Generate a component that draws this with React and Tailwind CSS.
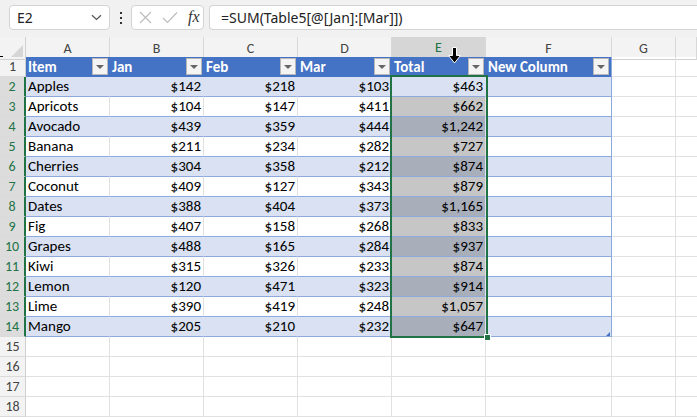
import React from 'react';

const ROWS = [
  ['Apples', '$142', '$218', '$103', '$463'],
  ['Apricots', '$104', '$147', '$411', '$662'],
  ['Avocado', '$439', '$359', '$444', '$1,242'],
  ['Banana', '$211', '$234', '$282', '$727'],
  ['Cherries', '$304', '$358', '$212', '$874'],
  ['Coconut', '$409', '$127', '$343', '$879'],
  ['Dates', '$388', '$404', '$373', '$1,165'],
  ['Fig', '$407', '$158', '$268', '$833'],
  ['Grapes', '$488', '$165', '$284', '$937'],
  ['Kiwi', '$315', '$326', '$233', '$874'],
  ['Lemon', '$120', '$471', '$323', '$914'],
  ['Lime', '$390', '$419', '$248', '$1,057'],
  ['Mango', '$205', '$210', '$232', '$647'],
];

const HEADERS = ['Item', 'Jan', 'Feb', 'Mar', 'Total', 'New Column'];
const COLS = ['A', 'B', 'C', 'D', 'E', 'F', 'G', ''];
const GRID = 'grid grid-cols-[26px_84px_94px_94px_94px_94px_126px_64px_1fr]';
const cellFont = { fontFamily: 'Carlito, Lato, "Liberation Sans", sans-serif' };

function FilterButton() {
  return (
    <div className="absolute right-[2px] top-[1px] w-[16px] h-[17px] bg-[#f4f4f4] border border-[#b8b8b8] flex items-center justify-center">
      <div className="w-0 h-0 border-l-[4px] border-r-[4px] border-t-[4px] border-l-transparent border-r-transparent border-t-[#666]" />
    </div>
  );
}

function RowHeader({ n, selected }) {
  return (
    <div
      className={`h-[20px] flex items-center justify-center text-[14px] border-b border-[#dadada] ${
        selected ? 'bg-[#dcdcdc] text-[#217346] border-r-2 border-r-[#217346]' : 'bg-[#f3f3f3] text-[#444] border-r border-r-[#d0d0d0]'
      }`}
      style={cellFont}
    >
      {n}
    </div>
  );
}

function TopBar() {
  return (
    <div className="h-[37px] bg-[#f1f1f1] flex items-start pt-[5px] pl-[9px] font-['Noto_Sans','Open_Sans',sans-serif]">
      <div className="w-[101px] h-[25px] bg-white border border-[#d4d4d4] rounded-[4px] flex items-center justify-between pl-[7px] pr-[7px] text-[14px] text-[#222]">
        <span>E2</span>
        <svg width="11" height="7" viewBox="0 0 11 7" fill="none" stroke="#555" strokeWidth="1.2">
          <path d="M1 1.2 L5.5 5.5 L10 1.2" />
        </svg>
      </div>
      <div className="w-[21px] h-[25px] flex flex-col items-center justify-center gap-[3px]">
        <div className="w-[2px] h-[2px] bg-[#333]" />
        <div className="w-[2px] h-[2px] bg-[#333]" />
        <div className="w-[2px] h-[2px] bg-[#333]" />
      </div>
      <div className="w-[73px] h-[25px] bg-white border border-[#d4d4d4] rounded-[4px] flex items-center pl-[7px] gap-[10px]">
        <svg width="13" height="13" viewBox="0 0 13 13" stroke="#bdbdbd" strokeWidth="1.2">
          <path d="M1 1 L12 12 M12 1 L1 12" />
        </svg>
        <svg width="16" height="13" viewBox="0 0 16 13" fill="none" stroke="#bdbdbd" strokeWidth="1.2">
          <path d="M1 7 L5.5 11.5 L15 1.5" />
        </svg>
        <span className="text-[16px] italic text-[#333] -mt-[2px]" style={{ fontFamily: '"Liberation Serif", serif' }}>fx</span>
      </div>
      <div className="ml-[5px] flex-1 h-[25px] bg-white border border-[#d4d4d4] rounded-l-[4px] border-r-0 flex items-center pl-[11px] text-[14px] text-[#222]">
        =SUM(Table5[@[Jan]:[Mar]])
      </div>
    </div>
  );
}

function ColumnHeader() {
  return (
    <div className={`${GRID} h-[20px] bg-[#f3f3f3]`}>
      <div className="relative border-r border-b border-[#d0d0d0]">
        <svg className="absolute right-[2px] bottom-[2px]" width="12" height="12" viewBox="0 0 12 12">
          <path d="M12 0 V12 H0 Z" fill="#d6d6d6" />
        </svg>
      </div>
      {COLS.map((c, i) => (
        <div
          key={i}
          className={`flex items-center justify-center text-[14px] border-r border-[#d8d8d8] ${
            c === 'E' ? 'bg-[#d6d6d6] text-[#217346] border-b-2 border-b-[#217346]' : 'text-[#444] border-b border-b-[#d0d0d0]'
          }`}
          style={cellFont}
        >
          {c}
        </div>
      ))}
    </div>
  );
}

function HeaderRow() {
  return (
    <div className={`${GRID} h-[20px]`}>
      <RowHeader n={1} />
      {HEADERS.map((h, i) => (
        <div
          key={h}
          className={`relative bg-[#4472c4] text-white font-bold text-[15px] pl-[2px] leading-[20px] ${i === 5 ? 'border-r border-r-[#8ea9db]' : ''}`}
          style={cellFont}
        >
          {h}
          <FilterButton />
        </div>
      ))}
      <div className="border-r border-b border-[#e1e1e1]" />
      <div className="border-b border-[#e1e1e1]" />
    </div>
  );
}

function DataRow({ row, idx }) {
  const banded = idx % 2 === 0;
  const n = idx + 2;
  const base = banded ? 'bg-[#d9e1f2]' : 'bg-white';
  const vline = banded ? 'border-r-[#d9e1f2]' : 'border-r-[#e1e1e1]';
  return (
    <div className={`${GRID} h-[20px]`} style={cellFont}>
      <RowHeader n={n} selected />
      {row.map((v, i) => {
        let bg = base;
        if (i === 4 && idx > 0) bg = banded ? 'bg-[#a9aebb]' : 'bg-[#c6c6c6]';
        return (
          <div
            key={i}
            className={`${bg} border-b border-b-[#8ea9db] border-r ${vline} text-[15px] text-black leading-[19px] ${
              i === 0 ? 'pl-[2px]' : 'text-right pr-[2px]'
            }`}
          >
            {v}
          </div>
        );
      })}
      <div className={`${base} border-b border-b-[#8ea9db] border-r border-r-[#8ea9db]`} />
      <div className="border-r border-b border-[#e1e1e1]" />
      <div className="border-b border-[#e1e1e1]" />
    </div>
  );
}

function EmptyRow({ n }) {
  return (
    <div className={`${GRID} h-[20px]`}>
      <RowHeader n={n} />
      {Array.from({ length: 7 }).map((_, i) => (
        <div key={i} className="border-r border-b border-[#e1e1e1]" />
      ))}
      <div className="border-b border-[#e1e1e1]" />
    </div>
  );
}

export default function App() {
  return (
    <div className="w-[697px] h-[417px] overflow-hidden bg-white relative">
      <TopBar />
      <div className="relative">
        <ColumnHeader />
        <HeaderRow />
        {ROWS.map((r, i) => (
          <DataRow key={r[0]} row={r} idx={i} />
        ))}
        {[15, 16, 17, 18].map(n => (
          <EmptyRow key={n} n={n} />
        ))}

        {/* selection E2:E14 */}
        <div className="absolute left-[390px] top-[38px] w-[98px] h-[263px] border-2 border-[#217346] pointer-events-none" />
        <div className="absolute left-[484px] top-[297px] w-[7px] h-[7px] bg-[#217346] border border-white" />
        {/* table resize handle */}
        <div className="absolute left-[606px] top-[295px] w-0 h-0"
          style={{ borderBottom: '4px solid #4472c4', borderLeft: '4px solid transparent' }} />
        {/* small mark left of row 1 */}
        <div className="absolute left-0 top-[19px] w-[3px] h-[1px] bg-black" />
        {/* column select cursor */}
        <svg className="absolute left-[448px] top-[10px]" width="13" height="17" viewBox="0 0 13 17">
          <path d="M4.5 0.5 H8.5 V8.5 H12.5 L6.5 16 L0.5 8.5 H4.5 Z" fill="#000" stroke="#fff" strokeWidth="1" />
        </svg>
      </div>
    </div>
  );
}
